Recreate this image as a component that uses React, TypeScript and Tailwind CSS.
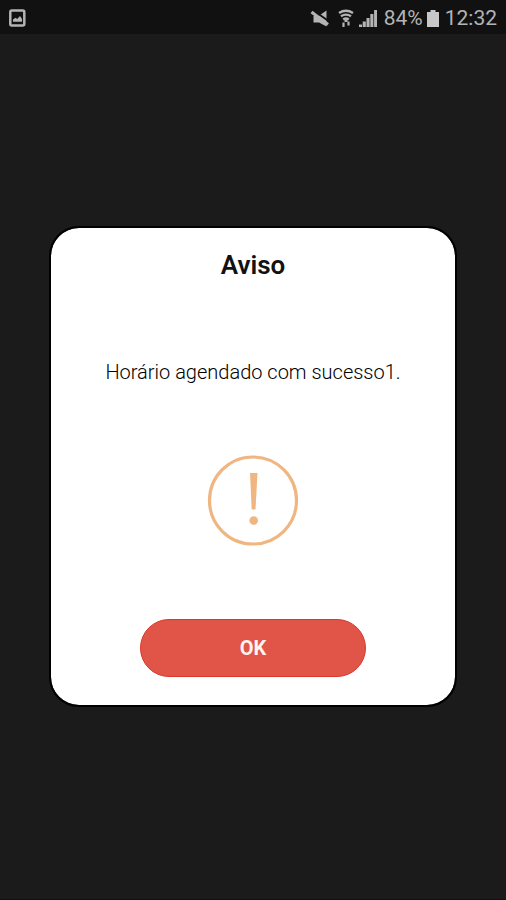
import { useState } from "react";

function StatusBar() {
  return (
    <header className="flex h-[34px] shrink-0 items-center justify-between bg-[#111111] pl-2 pr-[9px] pt-[3px] text-[#b4b4b4]">
      <svg className="h-5 w-5" viewBox="0 0 20 20" fill="none" aria-hidden="true">
        <rect x="2.3" y="1.5" width="14" height="15" rx="1.5" stroke="currentColor" strokeWidth="2.5" />
        <path d="M5 12.8V10.6l2.600-1.800 1.600 1.300 2.800-3 2 2.800v2.900z" fill="currentColor" />
      </svg>

      <div className="flex items-center">
        {/* sound off */}
        <svg className="mr-2 h-5 w-5" viewBox="0 0 20 20" aria-hidden="true">
          <path d="M3.500 7h5L16.500 1.500v16L9 13.500H3.500z" fill="currentColor" />
          <path d="M2 .5l16.500 11.500" stroke="#111111" strokeWidth="2" />
          <path d="M1.500 3l16.500 12.500" stroke="currentColor" strokeWidth="3" />
        </svg>
        {/* wifi */}
        <svg className="mr-1 h-5 w-4" viewBox="0 0 16 20" fill="none" aria-hidden="true">
          <path d="M1 4Q8-.5 15 4M3 7.300q5-3.400 10 0M5.200 10.500q2.800-2 5.600 0" stroke="currentColor" strokeWidth="2.300" />
          <path d="M8 10.500v2.500" stroke="currentColor" strokeWidth="3" />
          <path d="M5.500 13.500v4.500M10.500 12.500v4" stroke="currentColor" strokeWidth="2.200" />
        </svg>
        {/* mobile signal */}
        <svg className="mr-[6px] h-5 w-5" viewBox="0 0 20 20" fill="currentColor" aria-hidden="true">
          <path d="M1 15.500h3V18H1zM4.700 12.500h3.100V18H4.700zM8.500 9h3.100v9H8.500zM12.300 5h3.100v13h-3.100zM16.100 1H19v17h-2.900z" />
        </svg>
        <span>84%</span>
        {/* battery */}
        <svg className="ml-1 mr-[6px] h-5 w-3" viewBox="0 0 12 20" fill="#c8c8c8" aria-hidden="true">
          <path d="M3.500 1h5v2H12v15H0V3h3.500z" />
        </svg>
        <time>12:32</time>
      </div>
    </header>
  );
}

function WarningIcon() {
  return (
    <svg className="h-[92px] w-[92px]" viewBox="0 0 92 92" aria-hidden="true">
      <circle cx="46" cy="45.5" r="43.5" fill="none" stroke="#f0b682" strokeWidth="3.2" />
      <path d="M43 18h7.500L48.500 54.500h-3.800z" fill="#f0b682" />
      <circle cx="46.700" cy="65.500" r="4.300" fill="#f0b682" />
    </svg>
  );
}

function Alert({ title, message, cb }: { title: string; message: string; cb: () => void }) {
  return (
    <section
      role="alertdialog"
      aria-labelledby="alert-title"
      aria-describedby="alert-message"
      className="flex w-full flex-col items-center rounded-[28px] bg-white px-5 pb-7 pt-5 outline-2 outline-black"
    >
      <h1 id="alert-title" className="text-[26px] font-semibold leading-[34px] text-[#111111]">
        {title}
      </h1>
      <p id="alert-message" className="mt-[76px] text-center text-xl font-light text-black">
        {message}
      </p>
      <div className="mt-[69px]">
        <WarningIcon />
      </div>
      <button
        type="button"
        onClick={cb}
        className="mt-[72px] h-[58px] w-[226px] rounded-full border border-[#d9382c] bg-[#e05548] text-xl font-bold text-[#fff4ee] hover:cursor-pointer"
      >
        OK
      </button>
    </section>
  );
}

function App() {
  const [open, setOpen] = useState(true);

  return (
    <div className="flex min-h-screen flex-col border-b border-[#160d12] bg-[#1b1b1b] font-[Roboto,sans-serif] text-[21px]">
      <StatusBar />
      <main className="flex grow items-center justify-center px-[51px]">
        {open && (
          <Alert
            title="Aviso"
            message="Horário agendado com sucesso1."
            cb={() => setOpen(false)}
          />
        )}
      </main>
    </div>
  );
}

export default App;
